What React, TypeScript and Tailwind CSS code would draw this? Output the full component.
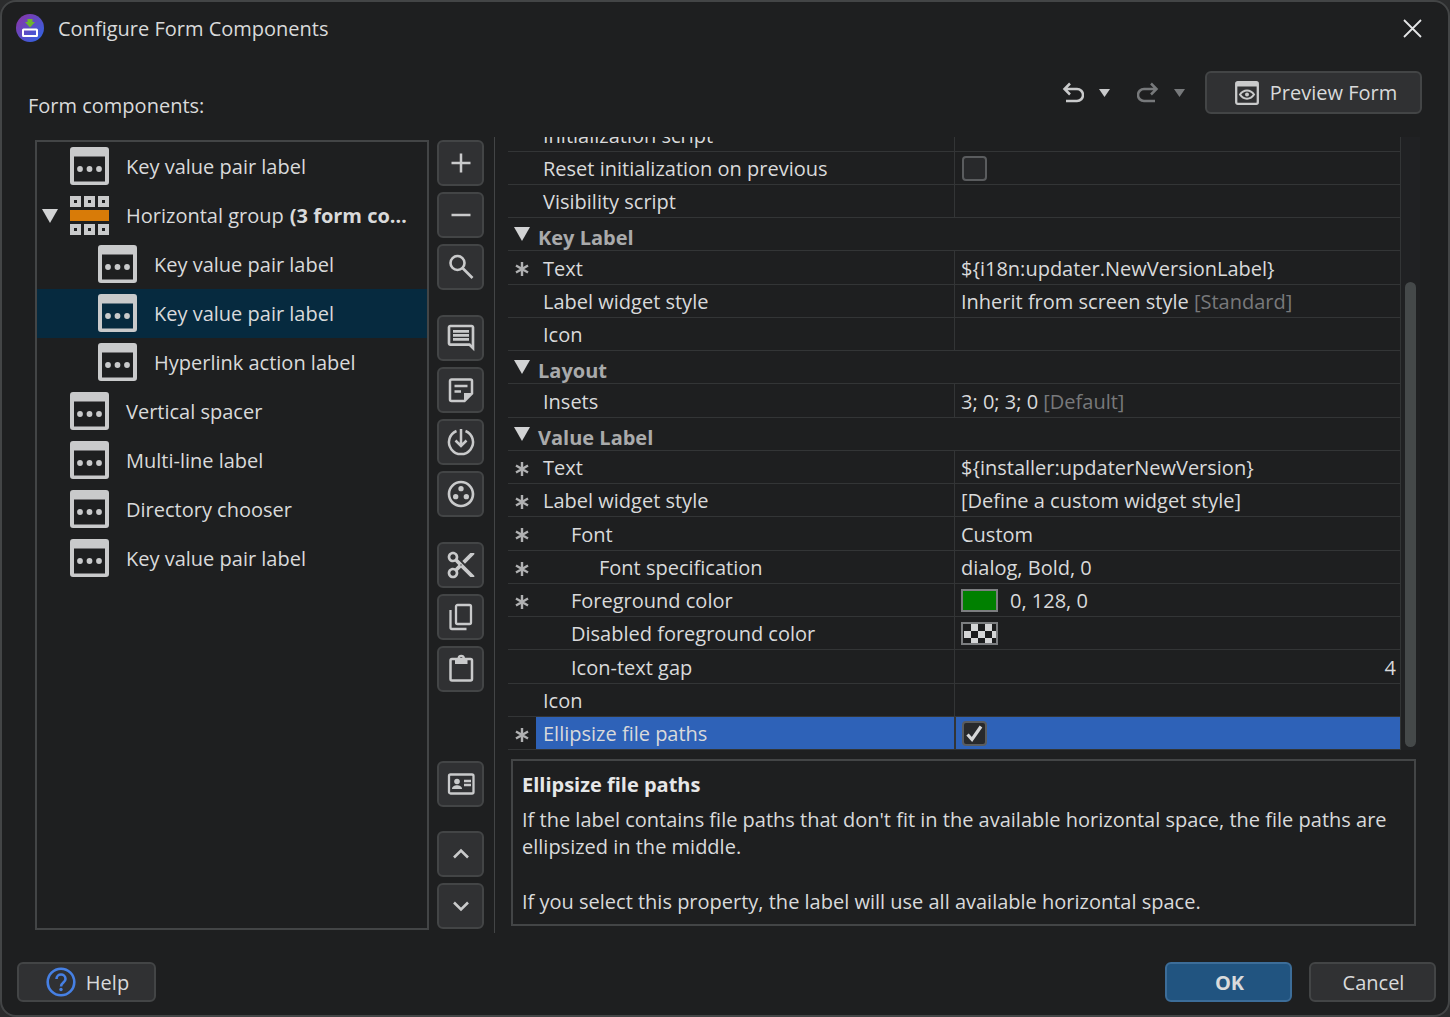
import React, { useState } from 'react';
import { MdContentCut, MdOutlineComment, MdOutlineGroupWork } from 'react-icons/md';

const FormItemIcon = () => (
  <svg width="39" height="39" viewBox="0 0 39 39" className="shrink-0" fill="#c9cacb">
    <path fillRule="evenodd" d="M3 0h33a3 3 0 0 1 3 3v32a3 3 0 0 1-3 3H3a3 3 0 0 1-3-3V3a3 3 0 0 1 3-3zM4 9.500v25h31v-25z" />
    <circle cx="10" cy="22" r="2.900" />
    <circle cx="19.500" cy="22" r="2.900" />
    <circle cx="29" cy="22" r="2.900" />
  </svg>
);

const GroupIcon = () => (
  <svg width="39" height="39" viewBox="0 0 39 39" className="shrink-0">
    <path
      fill="#c9cacb"
      fillRule="evenodd"
      d="M0 0h11v11H0zM4 4v3h3V4zM14 0h11v11H14zM18 4v3h3V4zM28 0h11v11H28zM32 4v3h3V4zM0 28h11v11H0zM4 32v3h3v-3zM14 28h11v11H14zM18 32v3h3v-3zM28 28h11v11H28zM32 32v3h3v-3z"
    />
    <path fill="#d87b08" d="M0 14h39v11H0z" />
  </svg>
);

const Triangle = () => (
  <svg width="16" height="14" viewBox="0 0 16 14" className="shrink-0" fill="#d2d3d4">
    <path d="M0 0h16L8 14z" />
  </svg>
);

const Star = () => (
  <svg width="14" height="16" viewBox="0 0 14 16" className="mx-auto" stroke="#b0b1b2" strokeWidth="2.4">
    <path d="M7 1v14M1 4.500l12 7M13 4.500l-12 7" />
  </svg>
);

const Stroke = ({ children, width = 2 }) => (
  <svg width="30" height="30" viewBox="0 0 30 30" fill="none" stroke="currentColor" strokeWidth={width}>
    {children}
  </svg>
);

const toolGroups = [
  {
    gap: '',
    tools: [
      { name: 'Add', icon: <Stroke width={2.5}><path d="M15 5.500v19M5.500 15h19" /></Stroke> },
      { name: 'Remove', icon: <Stroke width={2.5}><path d="M5.500 15h19" /></Stroke> },
      {
        name: 'Search',
        icon: <Stroke width={2.6}><circle cx="11.500" cy="11" r="7" /><path d="M16.500 16l10 10" /></Stroke>,
      },
    ],
  },
  {
    gap: 'mt-[25px]',
    tools: [
      { name: 'Comment', icon: <MdOutlineComment size={32} /> },
      {
        name: 'Note',
        icon: (
          <Stroke width={2.5}>
            <path d="M5.500 4.500h19a1.500 1.500 0 0 1 1.500 1.500v12.500L18.500 26h-13A1.500 1.500 0 0 1 4 24.500V6a1.500 1.500 0 0 1 1.500-1.500zM8.500 11h13M8.500 16.500h6.500" />
            <path d="M18 26v-8h8z" fill="currentColor" stroke="none" />
          </Stroke>
        ),
      },
      {
        name: 'Initialization',
        icon: (
          <Stroke width={2.5}>
            <path d="M10.500 4A12 12 0 1 0 19.500 4M15 2v17M9.500 13.500L15 19l5.500-5.500" />
          </Stroke>
        ),
      },
      { name: 'Group', icon: <MdOutlineGroupWork size={32} /> },
    ],
  },
  {
    gap: 'mt-[25px]',
    tools: [
      { name: 'Cut', icon: <MdContentCut size={32} /> },
      {
        name: 'Copy',
        icon: (
          <Stroke width={2.3}>
            <rect x="10" y="3" width="15" height="19" rx="1.500" />
            <path d="M4.500 8v17.500a1.500 1.500 0 0 0 1.500 1.500h14.500" />
          </Stroke>
        ),
      },
      {
        name: 'Paste',
        icon: (
          <Stroke width={2.5}>
            <rect x="4.500" y="5" width="21.500" height="21.500" rx="1.500" />
            <path
              d="M9 4h2.500a3.800 3.800 0 0 1 7.500 0h2.500v6H9zM15.200 3a1.500 1.500 0 1 0 .01 0z"
              fill="currentColor"
              fillRule="evenodd"
              stroke="none"
            />
          </Stroke>
        ),
      },
    ],
  },
  {
    gap: 'mt-[69px]',
    tools: [
      {
        name: 'Edit ID',
        icon: (
          <Stroke width={2.3}>
            <rect x="3" y="5.500" width="24.500" height="19" rx="1.500" />
            <circle cx="11" cy="12.500" r="2.800" fill="currentColor" stroke="none" />
            <path d="M6 20c0-5 10-5 10 0z" fill="currentColor" stroke="none" />
            <path d="M18 12h7M18 16h7" />
          </Stroke>
        ),
      },
    ],
  },
  {
    gap: 'mt-[24px]',
    tools: [
      { name: 'Move up', icon: <Stroke width={2.6}><path d="M8 18.500l7-7 7 7" /></Stroke> },
      { name: 'Move down', icon: <Stroke width={2.6}><path d="M8 11.500l7 7 7-7" /></Stroke> },
    ],
  },
];

const treeItems = [
  { text: 'Key value pair label' },
  { text: 'Horizontal group', extra: '(3 form components)', group: true },
  { text: 'Key value pair label', child: true },
  { text: 'Key value pair label', child: true },
  { text: 'Hyperlink action label', child: true },
  { text: 'Vertical spacer' },
  { text: 'Multi-line label' },
  { text: 'Directory chooser' },
  { text: 'Key value pair label' },
];

const GreenSwatch = () => <span className="h-[23px] w-[37px] border-2 border-[#7c7e80] bg-[#008000]" />;

const EmptySwatch = () => (
  <svg width="37" height="23" viewBox="0 0 37 23">
    <path fill="#1b1c1d" stroke="#7c7e80" strokeWidth="2" d="M1 1h35v21H1z" />
    <path
      fill="#d5d6d7"
      d="M10 2h7v7h-7zM24 2h7v7h-7zM3 9h7v7H3zM17 9h7v7h-7zM31 9h4v7h-4zM10 16h7v5h-7zM24 16h7v5h-7z"
    />
  </svg>
);

const rows = [
  { name: 'Initialization script' },
  { name: 'Reset initialization on previous', check: 'reset' },
  { name: 'Visibility script' },
  { section: 'Key Label' },
  { name: 'Text', changed: true, value: '${i18n:updater.NewVersionLabel}' },
  { name: 'Label widget style', value: 'Inherit from screen style', hint: '[Standard]' },
  { name: 'Icon' },
  { section: 'Layout' },
  { name: 'Insets', value: '3; 0; 3; 0', hint: '[Default]' },
  { section: 'Value Label' },
  { name: 'Text', changed: true, value: '${installer:updaterNewVersion}' },
  { name: 'Label widget style', changed: true, value: '[Define a custom widget style]' },
  { name: 'Font', changed: true, indent: 'pl-[35px]', value: 'Custom' },
  { name: 'Font specification', changed: true, indent: 'pl-[63px]', value: 'dialog, Bold, 0' },
  { name: 'Foreground color', changed: true, indent: 'pl-[35px]', swatch: <GreenSwatch />, value: '0, 128, 0' },
  { name: 'Disabled foreground color', indent: 'pl-[35px]', swatch: <EmptySwatch /> },
  { name: 'Icon-text gap', indent: 'pl-[35px]', value: '4', right: true },
  { name: 'Icon' },
  { name: 'Ellipsize file paths', changed: true, check: 'ellipsize', selected: true },
];

const Tree = () => {
  const [selected, setSelected] = useState(3);

  return (
    <ul className="w-[394px] shrink-0 border-2 border-[#434546]">
      {treeItems.map((item, index) => (
        <li key={index}>
          <button
            onClick={() => setSelected(index)}
            className={`flex h-[49px] w-full items-center pr-3 text-left ${item.child ? 'pl-[61px]' : item.group ? 'pl-[5px]' : 'pl-[33px]'} ${index === selected ? 'bg-[#062a3f]' : ''}`}
          >
            {item.group && <span className="mr-3"><Triangle /></span>}
            {item.group ? <GroupIcon /> : <FormItemIcon />}
            <span className="ml-[17px] flex min-w-0 gap-[6px]">
              <span className="shrink-0">{item.text}</span>
              {item.extra && <b className="truncate font-bold">{item.extra}</b>}
            </span>
          </button>
        </li>
      ))}
    </ul>
  );
};

const Toolbar = () => (
  <div className="ml-2 flex shrink-0 flex-col">
    {toolGroups.map((group, index) => (
      <div key={index} className={`flex flex-col gap-[6px] ${group.gap}`}>
        {group.tools.map((tool) => (
          <button
            key={tool.name}
            aria-label={tool.name}
            className="flex h-[46px] w-[47px] items-center justify-center rounded-md border-2 border-[#434546] bg-[#303133] text-[#c9cacb]"
          >
            {tool.icon}
          </button>
        ))}
      </div>
    ))}
  </div>
);

const PropertyTable = () => {
  const [checks, setChecks] = useState({ reset: false, ellipsize: true });

  return (
    <div className="flex h-[613px]">
      <div className="flex h-full min-w-0 flex-1 flex-col justify-end overflow-hidden border-r border-[#333536]">
        <table className="w-full shrink-0 table-fixed border-separate border-spacing-0">
          <colgroup>
            <col className="w-[28px]" />
            <col className="w-[419px]" />
            <col />
          </colgroup>
          <tbody>
            {rows.map((row, index) =>
              row.section ? (
                <tr key={index} className="h-[33px] nth-[4n+1]:h-[34px]">
                  <th colSpan={3} className="border-b border-[#333536] p-0 pl-[6px] text-left font-bold text-[#a9aaab]">
                    <div className="flex h-8 items-center gap-2 pt-[6px]">
                      <span className="pb-[6px]"><Triangle /></span>
                      {row.section}
                    </div>
                  </th>
                </tr>
              ) : (
                <tr key={index} className="h-[33px] nth-[4n+1]:h-[34px]">
                  <td className="border-b border-[#333536] p-0 pt-[3px]">{row.changed && <Star />}</td>
                  <td
                    className={`border-r border-b border-[#333536] p-0 pt-px ${row.indent || 'pl-[7px]'} ${row.selected ? 'bg-[#2e62b8]' : ''}`}
                  >
                    {row.check ? <label htmlFor={row.check}>{row.name}</label> : row.name}
                  </td>
                  <td
                    className={`border-b border-[#333536] p-0 pt-px pl-[6px] ${row.selected ? 'border-l bg-[#2e62b8]' : ''} ${row.right ? 'pr-1 text-right' : ''}`}
                  >
                    {row.check && (
                      <span className={`grid w-[25px] ${row.selected ? '' : 'ml-px'}`}>
                        <input
                          id={row.check}
                          type="checkbox"
                          checked={checks[row.check]}
                          onChange={(e) => setChecks({ ...checks, [row.check]: e.target.checked })}
                          className="col-start-1 row-start-1 h-[25px] w-[25px] appearance-none rounded border-2 border-[#5a5c5e] bg-[#28292b]"
                        />
                        {checks[row.check] && (
                          <svg
                            viewBox="0 0 25 25"
                            className="pointer-events-none col-start-1 row-start-1 h-[25px] w-[25px]"
                            fill="none"
                            stroke="#d5d6d7"
                            strokeWidth="3.2"
                          >
                            <path d="M5.500 13.500l4.500 5L19 5.500" />
                          </svg>
                        )}
                      </span>
                    )}
                    {row.swatch && (
                      <span className="flex items-center gap-3">
                        {row.swatch}
                        {row.value}
                      </span>
                    )}
                    {!row.swatch && row.value} {row.hint && <span className="text-[#78797b]">{row.hint}</span>}
                  </td>
                </tr>
              )
            )}
          </tbody>
        </table>
      </div>
      {/* Scrollbar */}
      <div className="flex w-[19px] flex-col bg-[#202123] pt-[145px] pb-[3px] pl-1">
        <div className="w-[11px] flex-1 rounded-full bg-[#45494a]" />
      </div>
    </div>
  );
};

const App = () => {
  return (
    <div className="min-h-screen bg-[#2b2c2d] font-['Open_Sans','Noto_Sans',sans-serif] text-[20px] leading-[27px] text-[#d9dadb]">
      <div className="flex min-h-screen flex-col rounded-[16px] border-2 border-[#434546] bg-[#1e1f20] pb-[13px]">
        {/* Title bar */}
        <header className="flex h-[52px] items-center pr-[26px] pl-[14px]">
          <svg width="28" height="28" viewBox="0 0 28 28">
            <defs>
              <linearGradient id="logo" x1="0" y1="0" x2="1" y2="1">
                <stop offset="0.2" stopColor="#7b3cb0" />
                <stop offset="1" stopColor="#2867e8" />
              </linearGradient>
            </defs>
            <circle cx="14" cy="14" r="14" fill="url(#logo)" />
            <path fill="#6db52c" d="M11.500 5h5v3H19l-5 5.500L9 8h2.500z" />
            <rect x="7" y="15.500" width="14" height="6.500" rx="0.500" fill="none" stroke="#fff" strokeWidth="2" />
          </svg>
          <h1 className="ml-[14px]">Configure Form Components</h1>
          <button aria-label="Close" className="ml-auto">
            <svg width="19" height="19" viewBox="0 0 19 19" stroke="#e4e5e6" strokeWidth="1.800">
              <path d="M1 1l17 17M18 1L1 18" />
            </svg>
          </button>
        </header>

        <div className="flex h-[83px] items-start pt-[17px] pr-[26px] pl-[26px]">
          <h2 className="mt-[21px]">Form components:</h2>
          <div className="mt-[11px] ml-auto flex items-center text-[#c9cacb]">
            <button aria-label="Undo" className="flex items-center gap-[15px]">
              <svg width="22" height="22" viewBox="0 0 22 22" fill="none" stroke="currentColor" strokeWidth="2.500">
                <path d="M8 1.500L2.500 7 8 12.500M2.500 7H15a5.500 5.500 0 0 1 0 12H4" />
              </svg>
              <svg width="11" height="8" viewBox="0 0 11 8" fill="currentColor"><path d="M0 0h11L5.500 8z" /></svg>
            </button>
            <button aria-label="Redo" disabled className="ml-[27px] flex items-center gap-[15px] text-[#77797b]">
              <svg width="22" height="22" viewBox="0 0 22 22" fill="none" stroke="currentColor" strokeWidth="2.500">
                <path d="M14 1.500L19.500 7 14 12.500M19.500 7H7a5.500 5.500 0 0 0 0 12h11" />
              </svg>
              <svg width="11" height="8" viewBox="0 0 11 8" fill="currentColor"><path d="M0 0h11L5.500 8z" /></svg>
            </button>
          </div>
          <button className="ml-5 flex h-[43px] w-[217px] items-center justify-center gap-[11px] rounded-md border-2 border-[#434546] bg-[#303133] pl-[5px]">
            <svg width="24" height="24" viewBox="0 0 24 24" fill="none" stroke="#c9cacb" strokeWidth="2">
              <rect x="1.200" y="1.200" width="21.600" height="21.600" rx="1.500" strokeWidth="2.300" />
              <path d="M1 3.500h22" strokeWidth="4" />
              <path d="M5 13.500c3.500-5.500 10.500-5.500 14 0-3.500 5.500-10.500 5.500-14 0z" />
              <circle cx="12" cy="13.500" r="2" fill="#c9cacb" stroke="none" />
            </svg>
            Preview Form
          </button>
        </div>

        <main className="flex flex-1 pr-[28px] pl-[33px]">
          <div className="flex shrink-0 pt-[3px] pb-[3px]">
            <Tree />
            <Toolbar />
          </div>
          <div className="ml-[10px] min-w-0 flex-1 border-l border-[#434546] pl-[13px]">
            <PropertyTable />
            <section className="mt-[9px] ml-[3px] mr-1 h-[167px] border-2 border-[#434546] px-[9px] py-[10px]">
              <h3 className="font-bold text-[#e6e7e8]">Ellipsize file paths</h3>
              <p className="mt-2">
                If the label contains file paths that don't fit in the available horizontal space, the file paths are
                ellipsized in the middle.
              </p>
              <p className="mt-7">If you select this property, the label will use all available horizontal space.</p>
            </section>
          </div>
        </main>

        <footer className="mt-[29px] flex items-center gap-[17px] pr-[12px] pl-[15px]">
          <button className="mr-auto flex h-10 w-[139px] items-center justify-center gap-[10px] rounded-md border-2 border-[#434546] bg-[#303133] pl-[2px]">
            <svg width="30" height="30" viewBox="0 0 30 30" fill="none" stroke="#4680e4" strokeWidth="2.600">
              <circle cx="15" cy="15" r="13.300" />
              <path d="M10.500 12c0-6 9-6 9 0 0 3.500-4.500 3.500-4.500 7.500" />
              <circle cx="15" cy="22.500" r="1.700" fill="#4680e4" stroke="none" />
            </svg>
            Help
          </button>
          <button className="h-10 w-[127px] rounded-md border-2 border-[#3c6d99] bg-[#215480] pl-[2px] font-bold">OK</button>
          <button className="h-10 w-[127px] rounded-md border-2 border-[#434546] bg-[#303133] pl-[2px]">Cancel</button>
        </footer>
      </div>
    </div>
  );
};

export default App;
